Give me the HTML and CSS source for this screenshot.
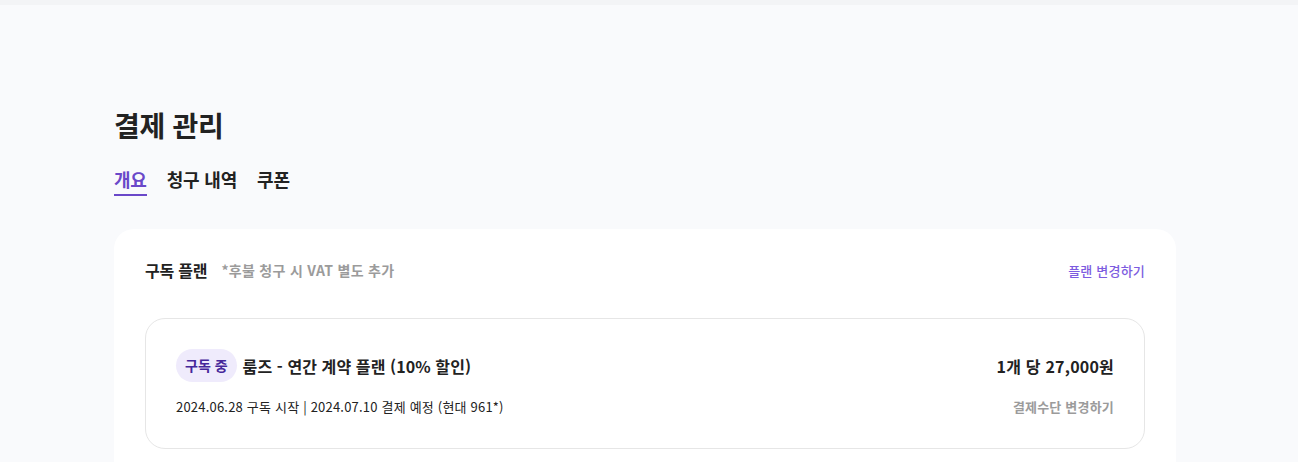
FILE: index.html
```html
<!DOCTYPE html>
<html lang="ko">
<head>
<meta charset="utf-8">
<title>결제 관리</title>
<link rel="stylesheet" href="styles.css">
</head>
<body>
<div class="topbar"></div>
<main class="page">
  <h1 class="title">결제 관리</h1>
  <nav class="tabs">
    <a class="tab active">개요</a>
    <a class="tab">청구 내역</a>
    <a class="tab">쿠폰</a>
  </nav>
  <section class="card">
    <div class="card-head">
      <div class="head-left">
        <h2 class="section-title">구독 플랜</h2>
        <span class="note">*후불 청구 시 VAT 별도 추가</span>
      </div>
      <a class="link-purple">플랜 변경하기</a>
    </div>
    <div class="plan">
      <div class="plan-row">
        <div class="plan-name">
          <span class="badge">구독 중</span>
          <span class="plan-title">룸즈 - 연간 계약 플랜 (10% 할인)</span>
        </div>
        <div class="price">1개 당 27,000원</div>
      </div>
      <div class="plan-row sub">
        <div class="dates">2024.06.28 구독 시작 | 2024.07.10 결제 예정 (현대 961*)</div>
        <a class="link-gray">결제수단 변경하기</a>
      </div>
    </div>
  </section>
</main>
</body>
</html>
```
FILE: styles.css
```css
* { box-sizing: border-box; }
html, body { margin: 0; padding: 0; }
body {
  background: #f9fafc;
  font-family: "Noto Sans CJK KR", "Noto Sans", sans-serif;
  color: #222;
  height: 462px;
  overflow: hidden;
}
.topbar {
  height: 5px;
  background: #f3f4f6;
}
.page {
  padding: 0 122px 0 114px;
}
.title {
  margin: 100px 0 0;
  font-size: 28px;
  line-height: 40px;
  font-weight: 700;
  letter-spacing: -0.3px;
  color: #222;
}
.tabs {
  display: flex;
  gap: 20px;
  margin-top: 21px;
}
.tab {
  font-size: 18px;
  font-weight: 700;
  line-height: 26px;
  letter-spacing: -0.2px;
  color: #222;
  padding-bottom: 2px;
  border-bottom: 2px solid transparent;
}
.tab.active {
  color: #6a48c9;
  border-bottom-color: #6a48c9;
}
.card {
  margin-top: 33px;
  background: #fff;
  border-radius: 20px;
  padding: 30px 31px 40px;
  height: 400px;
}
.card-head {
  display: flex;
  justify-content: space-between;
  align-items: center;
  height: 22px;
}
.head-left {
  display: flex;
  align-items: center;
  gap: 14px;
}
.section-title {
  margin: 0;
  font-size: 16px;
  font-weight: 700;
  letter-spacing: -0.2px;
  color: #222;
}
.note {
  font-size: 14px;
  font-weight: 700;
  color: #9b9b9b;
  letter-spacing: 0.3px;
}
.link-purple {
  font-size: 13px;
  font-weight: 500;
  color: #7d5ce0;
  letter-spacing: 0.2px;
}
.plan {
  margin-top: 37px;
  border: 1px solid #e6e6e6;
  border-radius: 20px;
  padding: 30px 30px 32px;
}
.plan-row {
  display: flex;
  justify-content: space-between;
  align-items: center;
}
.plan-row.sub {
  margin-top: 15px;
}
.plan-name {
  display: flex;
  align-items: center;
  gap: 6px;
}
.badge {
  display: inline-block;
  background: #efebfc;
  color: #45279a;
  font-size: 14px;
  font-weight: 700;
  line-height: 33px;
  height: 33px;
  padding: 0 9px;
  border-radius: 17px;
  letter-spacing: 0;
}
.plan-title {
  font-size: 16px;
  font-weight: 700;
  letter-spacing: 0.1px;
  color: #222;
}
.price {
  font-size: 16px;
  font-weight: 700;
  letter-spacing: 0.2px;
  color: #222;
}
.dates {
  font-size: 13px;
  font-weight: 400;
  letter-spacing: 0.2px;
  color: #222;
}
.link-gray {
  font-size: 13px;
  font-weight: 700;
  color: #9b9b9b;
  letter-spacing: 0.2px;
}
```
